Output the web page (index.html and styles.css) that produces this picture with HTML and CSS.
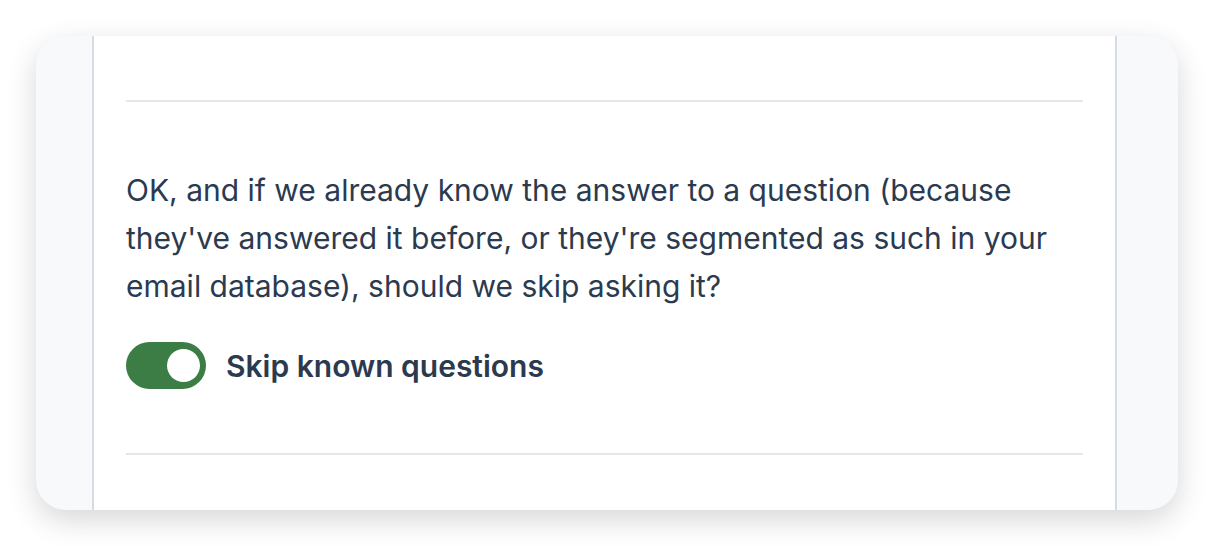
FILE: index.html
```html
<!DOCTYPE html>
<html lang="en">

<head>
    <meta charset="UTF-8" />
    <meta name="viewport" content="width=device-width, initial-scale=1.0" />
    <title>Skip known questions</title>
    <link rel="stylesheet" href="styles.css">
</head>

<body>
    <div class="card">
        <div class="panel">
            <hr class="divider top">

            <!-- question + toggle -->
            <section class="setting">
                <p class="question">OK, and if we already know the answer to a question (because
                    they've answered it before, or they're segmented as such in your email
                    database), should we skip asking it?</p>
                <label class="toggle-row">
                    <span class="toggle on"><span class="knob"></span></span>
                    <span class="toggle-label">Skip known questions</span>
                </label>
            </section>

            <hr class="divider bottom">
        </div>
    </div>
</body>

</html>
```

FILE: styles.css
```css
body {
    margin: 0;
    padding: 36px;
    background-color: #ffffff;
    font-family: 'Inter', 'Noto Sans', sans-serif;
    color: #2b3a4f;
}

.card {
    width: 1142px;
    height: 474px;
    background: #f8f9fb;
    border-radius: 30px;
    overflow: hidden;
    box-shadow: 0 10px 30px rgba(0, 0, 0, 0.16);
    display: flex;
    padding-left: 56px;
    box-sizing: border-box;
}

.panel {
    width: 1025px;
    background: #ffffff;
    border-left: 2px solid #d6dce6;
    border-right: 2px solid #d6dce6;
    box-sizing: border-box;
    padding: 0 32px;
}

.divider {
    border: none;
    height: 2px;
    background: #e6e7eb;
    margin: 0;
}

.divider.top {
    margin-top: 64px;
}

.setting {
    padding: 64px 0 64px;
}

.question {
    margin: 0;
    font-size: 30px;
    line-height: 48px;
}

.toggle-row {
    display: flex;
    align-items: center;
    gap: 20px;
    margin-top: 32px;
}

.toggle {
    width: 80px;
    height: 47px;
    border-radius: 24px;
    background: #3b7d44;
    display: flex;
    align-items: center;
    justify-content: flex-end;
    padding: 0 6px;
    box-sizing: border-box;
}

.knob {
    width: 33px;
    height: 33px;
    border-radius: 50%;
    background: #ffffff;
}

.toggle-label {
    font-size: 30px;
    font-weight: 600;
}
```
